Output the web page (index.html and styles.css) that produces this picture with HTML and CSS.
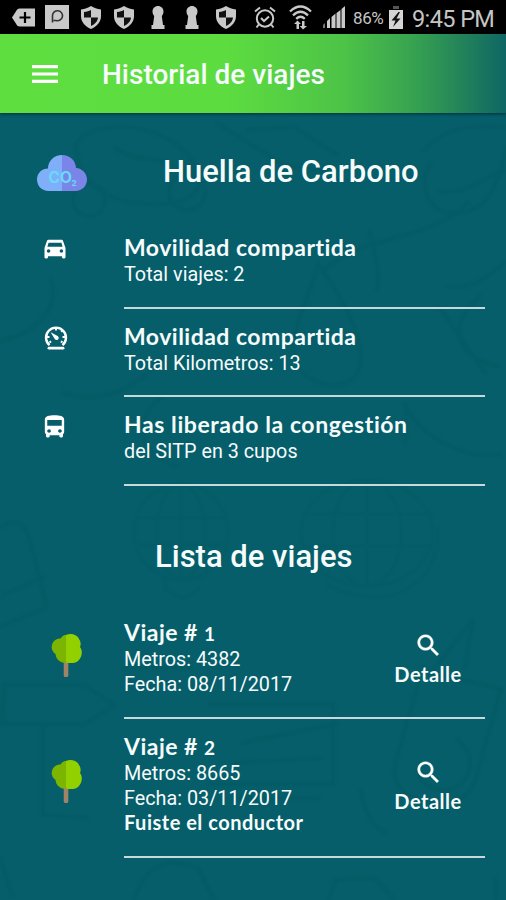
FILE: index.html
```html
<!DOCTYPE html>
<html lang="es">
<head>
<meta charset="utf-8">
<title>Historial de viajes</title>
<link rel="stylesheet" href="styles.css">
</head>
<body>
<svg class="defs" width="0" height="0">
  <defs>
    <symbol id="shield" viewBox="0 0 20 23">
      <path fill="#c9c9c9" d="M10 0 C7 2 4 3 0 3.4 V10 C0 16 4 20.500 10 23 C16 20.500 20 16 20 10 V3.400 C16 3 13 2 10 0Z"/>
      <path fill="#111" d="M10 4 V11.500 H17 C16.600 15.500 14 18 10 20 V11.500 H3 V6 C6 5.600 8 5 10 4Z"/>
    </symbol>
    <symbol id="keyhole" viewBox="0 0 14 23">
      <path fill="#c9c9c9" d="M7 0C10 0 12.500 2.300 12.500 5.500C12.500 7.500 11.500 9 10.800 10L12 19H13.500V23H.5V19H2L3.200 10C2.500 9 1.500 7.500 1.500 5.500C1.500 2.300 4 0 7 0Z"/>
    </symbol>
    <symbol id="search" viewBox="0 0 24 24">
      <path fill="#fff" stroke="#fff" stroke-width=".3" d="M15.500 14h-.79l-.28-.27C15.410 12.590 16 11.110 16 9.500 16 5.910 13.090 3 9.500 3S3 5.910 3 9.500 5.910 16 9.500 16c1.610 0 3.090-.59 4.230-1.570l.27.28v.79l5 4.990L20.490 19l-4.990-5zm-6 0C7.010 14 5 11.990 5 9.500S7.010 5 9.500 5 14 7.010 14 9.500 11.990 14 9.500 14z"/>
    </symbol>
    <symbol id="tree" viewBox="0 0 31 43">
      <path fill="#a28368" d="M12.700 25h4.600v16a2.300 2.300 0 0 1-4.600 0z"/>
      <path fill="#92d000" d="M15 1C19-1 26 0 28 5C30 8 30 11 29 13C32 17 31 22 28 26C25 29.500 20 29.500 15 28.500Z"/>
      <path fill="#7bb500" d="M15 .8C12 1.500 11 2.500 9.500 4.500C5 4.500 2 7 1 11C0 14 1.500 18 4.500 20C5 26 10 29 15 29Z"/>
    </symbol>
  </defs>
</svg>

<div class="status">
  <svg class="tag" viewBox="0 0 23 19"><path fill="#c9c9c9" d="M0 9.500 5 1.800Q6 .5 8 .5H23V18.500H8Q6 18.500 5 17.200Z"/><path stroke="#000" stroke-width="2.200" d="M7.500 9.500h11M13 4v11"/></svg>
  <svg class="pbox" viewBox="0 0 24 24"><path fill="#c9c9c9" d="M0 0h24v24H0z"/><path fill="none" stroke="#333" stroke-width="1.600" d="M7.500 17.500V10.500A5 5 0 1 1 11 15.500H8.500"/></svg>
  <svg class="shield s1"><use href="#shield"/></svg>
  <svg class="shield s2"><use href="#shield"/></svg>
  <svg class="key k1"><use href="#keyhole"/></svg>
  <svg class="key k2"><use href="#keyhole"/></svg>
  <svg class="shield s3"><use href="#shield"/></svg>
  <svg class="alarm" viewBox="0 0 22 23"><g fill="none" stroke="#c9c9c9" stroke-width="2"><circle cx="11" cy="12.500" r="8.200"/><path d="M1 5.500 6 1.500M21 5.500 16 1.500M4.800 18.500 2.500 21.500M17.200 18.500l2.300 3M7 12l3 3 5-4.500"/></g></svg>
  <svg class="wifi" viewBox="0 0 23 25"><g fill="none" stroke="#c9c9c9" stroke-width="2.300"><path d="M1 6.500Q11.500-3.500 22 6.500M4 10.300Q11.500 3.300 19 10.300M7.200 13.800Q11.500 9.800 15.800 13.800"/></g><path fill="#c9c9c9" d="M8.500 15.500 12 19h-2v5H7.500v-5H5zM14 24.500 10.800 21H13v-5h2.500v5H18z"/></svg>
  <svg class="signal" viewBox="0 0 22 22"><path fill="#777" d="M0 22v-3l2-2v5z"/><path fill="#c9c9c9" d="M4 22v-7l3-3v10zM8.500 22V11l4-3.500V22zM13.500 22V7l4-3V22zM18.500 22V3L22 0v22z"/></svg>
  <span class="pct">86%</span>
  <svg class="battery" viewBox="0 0 14 23"><path fill="#555" d="M4 0h6v3H4z"/><path fill="#d5d5d5" d="M0 4h14v19H0z"/><path fill="#111" d="M9.500 6 2.500 14.500h4L4 21l7.500-8.500h-4L11 6z"/></svg>
  <span class="clock">9:45 PM</span>
</div>

<header class="bar">
  <svg class="menu" viewBox="0 0 26 18"><path fill="#fff" d="M0 0h26v3.200H0zM0 7.400h26v3.200H0zM0 14.800h26V18H0z"/></svg>
  <h1>Historial de viajes</h1>
</header>

<main>
  <svg class="doodles" viewBox="0 0 506 787">
    <g fill="none" stroke="#043f4b" stroke-width="4" stroke-linecap="round">
      <path d="M76 32C83 14 125 8 155 20S197 50 196 62M76 32c0 34 28 57 70 59s58-10 54-35M115 35c30 20 50 2 75 28M217 10l68 43 48 5M247 17l47-3 43 28"/>
      <circle cx="89" cy="87" r="16"/><circle cx="187" cy="79" r="18"/>
      <path d="M424 38c19-24 53-28 82-23M430 50c-14 25 1 55 31 50s39-34 45-65M440 78c26 5 38-13 66-20"/>
      <path d="M318 151C308 190 287 220 296 248s58 34 64 5-18-68-42-102M326 155c45-36 100-25 142-65M370 119c5 23 10 38 7 58M448 174c21 3 42-10 58-26M440 195l45 65M480 183c-33 27-27 61 18 70"/>
      <path d="M0 228c40-9 60-35 51-62M63 280c47 13 78-10 103-38M161 285c-31 25-22 56 15 68M404 291c20 37 64 56 96 50M406 291l-1 40"/>
      <path d="M0 415q20-15 29 9l18 70-48 20M3 482l41-18"/>
      <g transform="translate(181 419)" stroke-width="2"><ellipse rx="47" ry="48"/><ellipse rx="24" ry="48"/><path d="M-46-14h92M-46 13h92M0-48v96M-18 42l3 17 18 8 16-12"/></g>
      <g transform="translate(367 420)" stroke-width="2"><ellipse rx="66" ry="53"/><ellipse rx="34" ry="53"/><path d="M-64-19H64M-65 13H65M0-53v106M70-5C76 51 20 83-40 52"/></g>
      <path d="M4 572h81l29 20-29 19H2zM43 611v91l44 3M122 555h70M210 591h123v80H210M235 650l86-5M235 685h84M242 630l95-19"/>
      <path d="M431 560l42-54-8 49M423 558l78 18-26 92q-13 31-50 21t-29-42l27-92M417 657a27 27 0 1 0 40-30M361 677q4 31 24 43"/>
      <path d="M134 787q16-50 64-32l16 32M328 787l8-20 38-2 21 22M0 744l12 38M496 767v20"/>
    </g>
  </svg>

  <div class="head">
    <svg class="cloud" viewBox="0 0 50 36"><path fill="#7faff8" d="M25 0C17 0 11 6 11 13.500C5 13.500 0 18 0 24.500S5 36 11.500 36H25z"/><path fill="#7b85e8" d="M25 0c8 0 13.500 5.500 14 13c6 .5 11 5 11 11.500S45 36 38.500 36H25z"/><text x="11.500" y="27.500" class="co">CO</text><text x="34.500" y="30.500" class="two">2</text></svg>
    <h2>Huella de Carbono</h2>
  </div>

  <section class="stats">
    <article class="stat">
      <svg class="ico" viewBox="0 0 24 24"><path fill="#fff" d="M18.920 6.010C18.720 5.420 18.160 5 17.500 5h-11c-.66 0-1.210.42-1.420 1.010L3 12v8c0 .55.450 1 1 1h1c.55 0 1-.45 1-1v-1h12v1c0 .55.450 1 1 1h1c.55 0 1-.45 1-1v-8l-2.080-5.990zM6.500 16c-.83 0-1.500-.67-1.500-1.500S5.670 13 6.500 13s1.500.67 1.500 1.500S7.330 16 6.500 16zm11 0c-.83 0-1.500-.67-1.500-1.500s.67-1.500 1.500-1.500 1.500.67 1.500 1.500-.67 1.500-1.500 1.500zM5.500 11l1-3.500h11l1 3.500z"/></svg>
      <div class="txt"><h3>Movilidad compartida</h3><p>Total viajes: 2</p></div>
    </article>
    <article class="stat">
      <svg class="ico gauge" viewBox="0 0 24 24"><g fill="none" stroke="#fff" stroke-width="2.200"><path d="M6 19.500A9.200 9.200 0 1 1 18 19.500"/><path d="M5.500 22.300h13" stroke-width="2.600" stroke-linecap="round"/><path stroke-width="1.800" d="M12 3v3M3 12h3M18 12h3M18.300 5.700l-1.500 1.500M6 17l1.500-1M18 17l-1.500-1"/></g><path fill="#fff" d="M7 7.500 13.500 11a2 2 0 1 1-2.800 2.600z"/></svg>
      <div class="txt"><h3>Movilidad compartida</h3><p>Total Kilometros: 13</p></div>
    </article>
    <article class="stat">
      <svg class="ico bus" viewBox="0 0 24 24" preserveAspectRatio="none"><path fill="#fff" d="M4 16c0 .88.390 1.670 1 2.220V20c0 .55.450 1 1 1h1c.55 0 1-.45 1-1v-1h8v1c0 .55.450 1 1 1h1c.55 0 1-.45 1-1v-1.780c.61-.55 1-1.340 1-2.220V6c0-3.500-3.580-4-8-4s-8 .5-8 4v10zm3.500 1c-.83 0-1.500-.67-1.500-1.500S6.670 14 7.500 14s1.500.67 1.500 1.500S8.330 17 7.500 17zm9 0c-.83 0-1.500-.67-1.500-1.500s.67-1.500 1.500-1.500 1.500.67 1.500 1.500-.67 1.500-1.500 1.500zm1.500-6H6V6h12v5z"/></svg>
      <div class="txt"><h3 class="wide">Has liberado la congestión</h3><p>del SITP en 3 cupos</p></div>
    </article>
  </section>

  <h2 class="list-title">Lista de viajes</h2>

  <section class="trips">
    <article class="trip first">
      <svg class="tree"><use href="#tree"/></svg>
      <div class="txt">
        <div class="info"><h3>Viaje # <span class="num">1</span></h3><p>Metros: 4382</p><p>Fecha: 08/11/2017</p></div>
        <div class="detail"><svg><use href="#search"/></svg><span>Detalle</span></div>
      </div>
    </article>
    <article class="trip second">
      <svg class="tree"><use href="#tree"/></svg>
      <div class="txt">
        <div class="info"><h3>Viaje # <span class="num">2</span></h3><p>Metros: 8665</p><p>Fecha: 03/11/2017</p><p class="driver">Fuiste el conductor</p></div>
        <div class="detail"><svg><use href="#search"/></svg><span>Detalle</span></div>
      </div>
    </article>
  </section>
</main>
</body>
</html>
```
FILE: styles.css
```css
* { box-sizing: border-box; margin: 0; padding: 0; }
body { width: 506px; height: 900px; overflow: hidden; background: #055e69; color: #f6fbfc; font-family: Roboto, sans-serif; }
svg { display: block; flex: none; }
.defs { position: absolute; }

.status { height: 34px; background: #000; display: flex; align-items: center; padding-left: 12px; color: #c5c5c5; white-space: nowrap; }
.tag { width: 23px; height: 19px; }
.pbox { width: 24px; height: 24px; margin-left: 10px; }
.shield { width: 20px; height: 23px; }
.s1 { margin-left: 12px; }
.s2 { margin-left: 13px; }
.s3 { margin-left: 17px; }
.key { width: 14px; height: 23px; }
.k1 { margin-left: 17px; }
.k2 { margin-left: 20px; }
.alarm { width: 22px; height: 23px; margin-left: 18px; }
.wifi { width: 23px; height: 25px; margin-left: 13px; }
.signal { width: 22px; height: 22px; margin-left: 11px; }
.pct { width: 36px; margin-left: 8px; font-size: 17px; letter-spacing: -.4px; padding-top: 2px; }
.battery { width: 14px; height: 23px; }
.clock { margin-left: 9px; font-size: 23.500px; letter-spacing: -.6px; padding-top: 3px; }

.bar { height: 79px; display: flex; align-items: center; padding-left: 32px; background: linear-gradient(90deg, #5fde40 0%, #5ddc40 45%, #4dc347 68%, #38a450 81%, #238459 91%, #0e6664 100%); box-shadow: 0 1px 3px rgba(0, 25, 40, .7); position: relative; z-index: 1; }
.menu { width: 26px; height: 18px; margin-top: 1px; }
h1 { margin-left: 44px; margin-top: 2px; font-size: 28px; font-weight: 500; line-height: 32px; white-space: nowrap; }

main { position: relative; height: 787px; padding-top: 35px; }
.doodles { position: absolute; left: 0; top: 0; width: 506px; height: 787px; opacity: .08; z-index: -1; filter: blur(1px); }
.head { height: 72px; display: flex; align-items: flex-start; padding-left: 37px; }
.cloud { width: 50px; height: 36px; margin-top: 7px; }
.co { font: 700 15.500px Inter, sans-serif; fill: #66dcfc; }
.two { font: 700 8px Inter, sans-serif; fill: #66dcfc; }
h2 { font-size: 31px; font-weight: 500; line-height: 46px; white-space: nowrap; padding-top: 1px; }
.head h2 { margin-left: 76px; }

.stat { height: 88.600px; display: flex; padding-left: 41px; }
.ico { width: 28px; height: 28px; margin-top: 14px; }
.gauge { margin-top: 15px; margin-left: 2px; width: 26px; height: 26px; }
.bus { margin-left: -1px; margin-top: 16px; width: 29px; }
.txt { width: 361px; margin-left: auto; margin-right: 21px; border-bottom: 2px solid #c9d8dd; flex: none; }
.stat .txt { padding-top: 13px; }
.stat h3 { height: 29px; }
h3 { font: 700 23px/28px Lato, sans-serif; letter-spacing: .48px; white-space: nowrap; }
.wide { letter-spacing: .58px; }
p { font-size: 19.800px; line-height: 25px; white-space: nowrap; }

.list-title { height: 110px; padding-left: 155px; padding-top: 48.500px; }
.trip { display: flex; padding-left: 51px; }
.trip .txt { display: flex; justify-content: space-between; }
.first { height: 123.500px; }
.second { height: 138.500px; }
.first .txt { padding-top: 22.500px; }
.second .txt { padding-top: 13px; }
.tree { width: 31px; height: 43px; margin-top: 38px; }
.second .tree { margin-top: 41px; }
.num { display: inline-block; font-size: 19px; }
.info h3 { height: 28.500px; }
.info p { line-height: 25.300px; }
.info .driver { font: 700 20px/24px Lato, sans-serif; letter-spacing: .5px; margin-top: -1px; }
.detail { width: 68px; margin-right: 23px; display: flex; flex-direction: column; align-items: center; font: 700 20px/24px Lato, sans-serif; letter-spacing: .5px; }
.detail svg { width: 29px; height: 29px; margin-top: 13px; margin-bottom: 2px; }
.second .detail svg { margin-top: 26px; }
```
